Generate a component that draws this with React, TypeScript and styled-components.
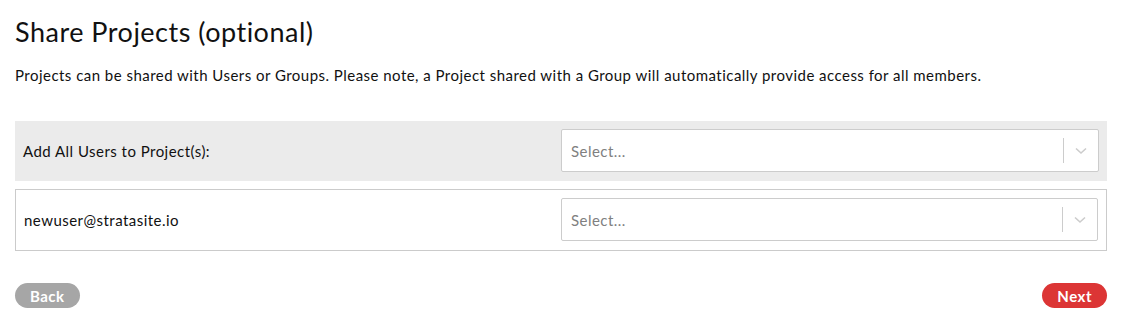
import React from "react";
import styled, { createGlobalStyle } from "styled-components";

const Global = createGlobalStyle`
  html, body { margin: 0; padding: 0; background: #fff; }
  body { font-family: Lato, "Noto Sans", sans-serif; color: #111; letter-spacing: 0.47px; }
  * { box-sizing: border-box; }
`;

const Page = styled.div`
  padding: 0 15px;
  width: 1122px;
`;

const Title = styled.h1`
  margin: 0;
  padding-top: 16px;
  font-size: 27px;
  font-weight: 400;
  line-height: 32px;
  letter-spacing: 0.5px;
  color: #111;
`;

const Intro = styled.p`
  margin: 17px 0 0;
  font-size: 15px;
  line-height: 20px;
  color: #111;
`;

const Rows = styled.div`
  margin-top: 36px;
  display: flex;
  flex-direction: column;
  gap: 8px;
`;

const Row = styled.div<{ $shaded?: boolean }>`
  display: grid;
  grid-template-columns: 1fr 1fr;
  align-items: center;
  padding: 8px 8px 9px;
  background: ${(p) => (p.$shaded ? "#ebebeb" : "#fff")};
  border: ${(p) => (p.$shaded ? "none" : "1px solid #cbcbcb")};
`;

const Label = styled.div`
  font-size: 15px;
  color: #111;
`;

const SelectBox = styled.div`
  height: 43px;
  border: 1px solid #ccc;
  border-radius: 2px;
  background: #fff;
  display: flex;
  align-items: center;
  padding-left: 9px;
`;

const Placeholder = styled.span`
  flex: 1;
  font-size: 15px;
  color: #808080;
`;

const Separator = styled.span`
  width: 1px;
  height: 25px;
  background: #ccc;
`;

const Indicator = styled.span`
  width: 34px;
  display: flex;
  justify-content: center;
  align-items: center;
  color: #ccc;
`;

const Footer = styled.div`
  margin-top: 32px;
  display: flex;
  justify-content: space-between;
`;

const Button = styled.button<{ $variant: "back" | "next" }>`
  height: 25px;
  padding: 0 15px;
  border: none;
  border-radius: 13px;
  font-family: Lato, "Noto Sans", sans-serif;
  font-weight: 700;
  font-size: 15px;
  letter-spacing: 0.5px;
  color: #fff;
  background: ${(p) => (p.$variant === "next" ? "#dc3535" : "#a6a6a6")};
  cursor: pointer;
`;

const Chevron = () => (
  <svg width="12" height="8" viewBox="0 0 12 8" fill="none">
    <path d="M1 1.5l5 4.5 5-4.5" stroke="currentColor" strokeWidth="1.6" />
  </svg>
);

const Select = () => (
  <SelectBox>
    <Placeholder>Select...</Placeholder>
    <Separator />
    <Indicator>
      <Chevron />
    </Indicator>
  </SelectBox>
);

export default function App() {
  return (
    <Page>
      <Global />
      <Title>Share Projects (optional)</Title>
      <Intro>
        Projects can be shared with Users or Groups. Please note, a Project shared with a Group will
        automatically provide access for all members.
      </Intro>
      <Rows>
        <Row $shaded>
          <Label>Add All Users to Project(s):</Label>
          <Select />
        </Row>
        <Row>
          <Label>newuser@stratasite.io</Label>
          <Select />
        </Row>
      </Rows>
      <Footer>
        <Button $variant="back">Back</Button>
        <Button $variant="next">Next</Button>
      </Footer>
    </Page>
  );
}
